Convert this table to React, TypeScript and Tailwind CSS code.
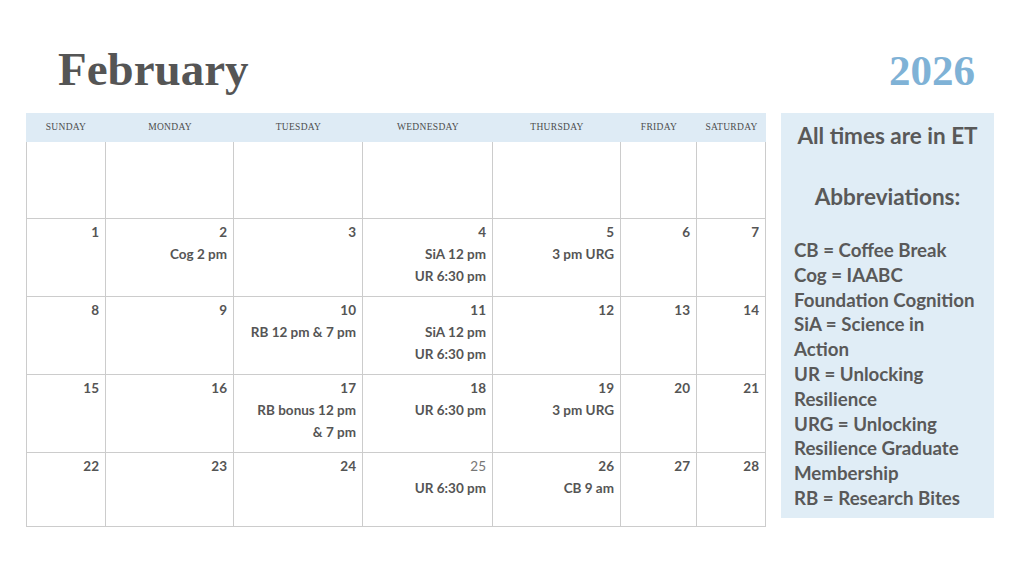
const days = ["Sunday", "Monday", "Tuesday", "Wednesday", "Thursday", "Friday", "Saturday"];

type Cell = { n?: number; events?: string[]; light?: boolean };

const weeks: Cell[][] = [
  [{}, {}, {}, {}, {}, {}, {}],
  [
    { n: 1 },
    { n: 2, events: ["Cog 2 pm"] },
    { n: 3 },
    { n: 4, events: ["SiA 12 pm", "UR 6:30 pm"] },
    { n: 5, events: ["3 pm URG"] },
    { n: 6 },
    { n: 7 },
  ],
  [
    { n: 8 },
    { n: 9 },
    { n: 10, events: ["RB 12 pm & 7 pm"] },
    { n: 11, events: ["SiA 12 pm", "UR 6:30 pm"] },
    { n: 12 },
    { n: 13 },
    { n: 14 },
  ],
  [
    { n: 15 },
    { n: 16 },
    { n: 17, events: ["RB bonus 12 pm", "& 7 pm"] },
    { n: 18, events: ["UR 6:30 pm"] },
    { n: 19, events: ["3 pm URG"] },
    { n: 20 },
    { n: 21 },
  ],
  [
    { n: 22 },
    { n: 23 },
    { n: 24 },
    { n: 25, events: ["UR 6:30 pm"], light: true },
    { n: 26, events: ["CB 9 am"] },
    { n: 27 },
    { n: 28 },
  ],
];

const legend = [
  "CB = Coffee Break",
  "Cog = IAABC",
  "Foundation Cognition",
  "SiA = Science in",
  "Action",
  "UR = Unlocking",
  "Resilience",
  "URG = Unlocking",
  "Resilience Graduate",
  "Membership",
  "RB = Research Bites",
];

const serif = { fontFamily: '"Liberation Serif", "DejaVu Serif", serif' };
const sans = { fontFamily: 'Lato, "Open Sans", sans-serif' };

export default function App() {
  return (
    <div className="w-[1024px] h-[576px] bg-white overflow-hidden">
      {/* Header */}
      <div className="h-[113px] flex justify-between items-start pl-[58px] pr-[49px]" style={serif}>
        <h1 className="mt-[42px] text-[47px] leading-[54px] font-bold text-[#555555]">February</h1>
        <div className="mt-[47px] text-[43px] leading-[48px] font-bold text-[#7fb2d6]">2026</div>
      </div>

      <div className="flex items-start pl-[26px] gap-[15px]">
        {/* Calendar */}
        <div className="w-[740px]" style={sans}>
          <div className="grid grid-cols-[80px_128px_129px_130px_128px_76px_69px] h-[29px] bg-[#deebf5]">
            {days.map((d) => (
              <div
                key={d}
                className="flex items-center justify-center text-[9.5px] uppercase tracking-[0.3px] text-[#4d4d4d]"
                style={serif}
              >
                {d}
              </div>
            ))}
          </div>
          <div className="border-l border-b border-[#cccccc]">
            {weeks.map((w, i) => (
              <div
                key={i}
                className={`grid grid-cols-[79px_128px_129px_130px_128px_76px_69px] ${i === 0 ? "h-[76px]" : i === 4 ? "h-[74px] border-t border-[#cccccc]" : "h-[78px] border-t border-[#cccccc]"}`}
              >
                {w.map((c, j) => (
                  <div key={j} className="border-r border-[#cccccc] pr-[6px] pt-[2px] text-right text-[#555555]">
                    {c.n !== undefined && (
                      <div className={`text-[13.5px] leading-[22px] ${c.light ? "font-normal text-[#777777]" : "font-bold"}`}>
                        {c.n}
                      </div>
                    )}
                    {c.events?.map((e) => (
                      <div key={e} className="text-[13.5px] leading-[22px] font-bold">
                        {e}
                      </div>
                    ))}
                  </div>
                ))}
              </div>
            ))}
          </div>
        </div>

        {/* Legend */}
        <div className="w-[213px] h-[405px] bg-[#e0edf6] text-[#595959] px-[13px] pt-[8px]" style={sans}>
          <div className="text-center text-[22.5px] leading-[30px] font-bold">All times are in ET</div>
          <div className="text-center text-[22.5px] leading-[30px] font-bold mt-[31px]">Abbreviations:</div>
          <div className="mt-[26px]">
            {legend.map((l) => (
              <div key={l} className="text-[18.7px] leading-[24.8px] font-bold whitespace-nowrap">
                {l}
              </div>
            ))}
          </div>
        </div>
      </div>
    </div>
  );
}
